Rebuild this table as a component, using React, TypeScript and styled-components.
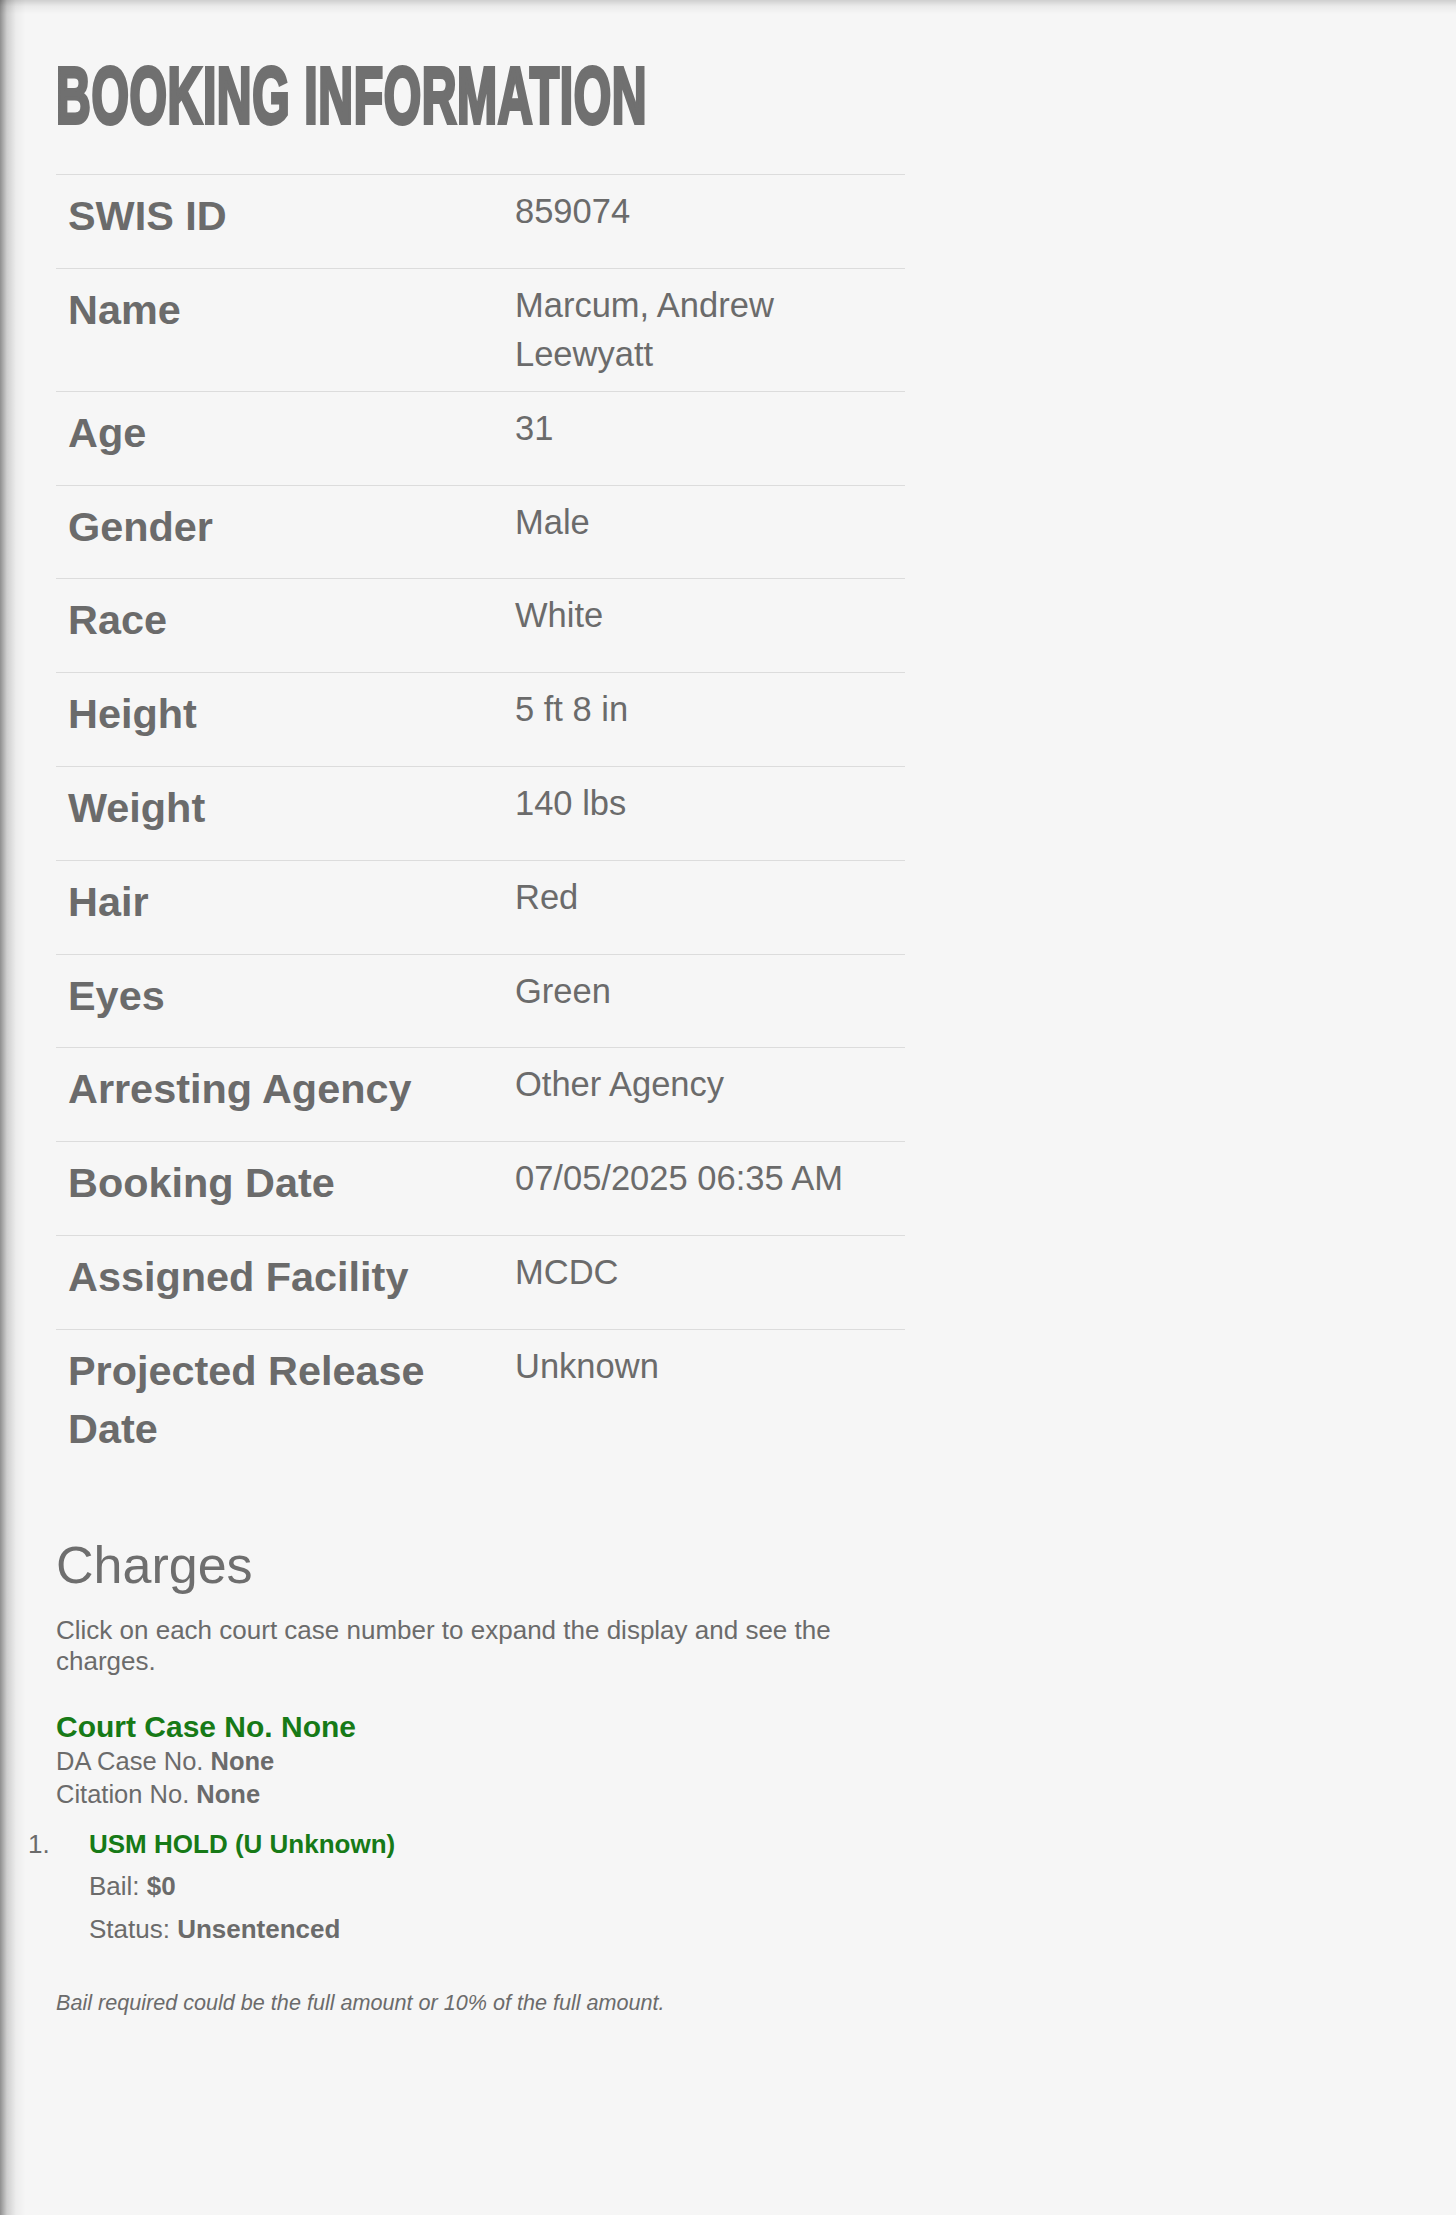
import React from "react";
import styled, { createGlobalStyle } from "styled-components";

const GlobalStyle = createGlobalStyle`
  html, body {
    margin: 0;
    padding: 0;
    background: #f6f6f6;
  }
  body {
    font-family: "Liberation Sans", Arial, sans-serif;
    color: #6b6b6b;
  }
  * { box-sizing: border-box; }
`;

const Page = styled.div`
  min-height: 2215px;
  background:
    linear-gradient(to right, rgba(0, 0, 0, 0.42) 0, rgba(0, 0, 0, 0.16) 7px, rgba(0, 0, 0, 0.04) 16px, rgba(0, 0, 0, 0) 26px),
    linear-gradient(to bottom, rgba(0, 0, 0, 0.16) 0, rgba(0, 0, 0, 0.05) 6px, rgba(0, 0, 0, 0) 14px),
    #f6f6f6;
`;

const Content = styled.main`
  width: 905px;
  padding: 56px 0 0 56px;
`;

const Title = styled.h1`
  margin: 0 0 38px;
  height: 80px;
  font-family: "Liberation Sans", Arial, sans-serif;
  font-weight: 700;
  font-size: 80px;
  line-height: 80px;
  color: #707070;
  letter-spacing: 1px;
  -webkit-text-stroke: 4px #707070;
  white-space: nowrap;
`;

const TitleText = styled.span`
  display: inline-block;
  transform: scaleX(0.602);
  transform-origin: left center;
`;

const Table = styled.div`
  display: grid;
  grid-template-columns: 447px 1fr;
`;

const Row = styled.div`
  display: contents;
`;

const Cell = styled.div`
  border-top: 1px solid #dcdcdc;
  padding: 12px 12px 11px;
`;

const Label = styled.h3`
  margin: 0 0 11.8px;
  font-size: 41.4px;
  line-height: 58px;
  font-weight: 700;
  color: #6b6b6b;
`;

const Value = styled.div`
  font-size: 34.5px;
  line-height: 49.5px;
  color: #6b6b6b;
`;

const SectionTitle = styled.h2`
  margin: 56px 0 21px;
  font-size: 52px;
  line-height: 57px;
  font-weight: 400;
  color: #6e6e6e;
`;

const Intro = styled.p`
  margin: 0 0 32px;
  width: 790px;
  font-size: 26px;
  line-height: 31.2px;
`;

const CaseTitle = styled.div`
  font-size: 30px;
  line-height: 36px;
  font-weight: 700;
  color: #177a17;
`;

const CaseMeta = styled.div`
  font-size: 25.5px;
  line-height: 33px;

  b {
    font-weight: 700;
  }
`;

const ChargeList = styled.ol`
  list-style: none;
  margin: 12px 0 0 -28px;
  padding: 0;
`;

const ChargeItem = styled.li`
  display: grid;
  grid-template-columns: 61px 1fr;
  font-size: 26px;
  line-height: 42.5px;
`;

const Marker = styled.span`
  color: #6b6b6b;
`;

const ChargeName = styled.div`
  font-weight: 700;
  color: #177a17;
`;

const ChargeLine = styled.div`
  b {
    font-weight: 700;
  }
`;

const Note = styled.p`
  margin: 40px 0 0;
  font-size: 21.6px;
  line-height: 26px;
  font-style: italic;
`;

const rows: [string, string][] = [
  ["SWIS ID", "859074"],
  ["Name", "Marcum, Andrew Leewyatt"],
  ["Age", "31"],
  ["Gender", "Male"],
  ["Race", "White"],
  ["Height", "5 ft 8 in"],
  ["Weight", "140 lbs"],
  ["Hair", "Red"],
  ["Eyes", "Green"],
  ["Arresting Agency", "Other Agency"],
  ["Booking Date", "07/05/2025 06:35 AM"],
  ["Assigned Facility", "MCDC"],
  ["Projected Release Date", "Unknown"],
];

export default function App() {
  return (
    <Page>
      <GlobalStyle />
      <Content>
        <Title>
          <TitleText>BOOKING INFORMATION</TitleText>
        </Title>
        <Table>
          {rows.map(([label, value]) => (
            <Row key={label}>
              <Cell>
                <Label>{label}</Label>
              </Cell>
              <Cell>
                <Value>{value}</Value>
              </Cell>
            </Row>
          ))}
        </Table>

        <SectionTitle>Charges</SectionTitle>
        <Intro>Click on each court case number to expand the display and see the charges.</Intro>

        <CaseTitle>Court Case No. None</CaseTitle>
        <CaseMeta>
          DA Case No. <b>None</b>
        </CaseMeta>
        <CaseMeta>
          Citation No. <b>None</b>
        </CaseMeta>

        <ChargeList>
          <ChargeItem>
            <Marker>1.</Marker>
            <div>
              <ChargeName>USM HOLD (U Unknown)</ChargeName>
              <ChargeLine>
                Bail: <b>$0</b>
              </ChargeLine>
              <ChargeLine>
                Status: <b>Unsentenced</b>
              </ChargeLine>
            </div>
          </ChargeItem>
        </ChargeList>

        <Note>Bail required could be the full amount or 10% of the full amount.</Note>
      </Content>
    </Page>
  );
}
